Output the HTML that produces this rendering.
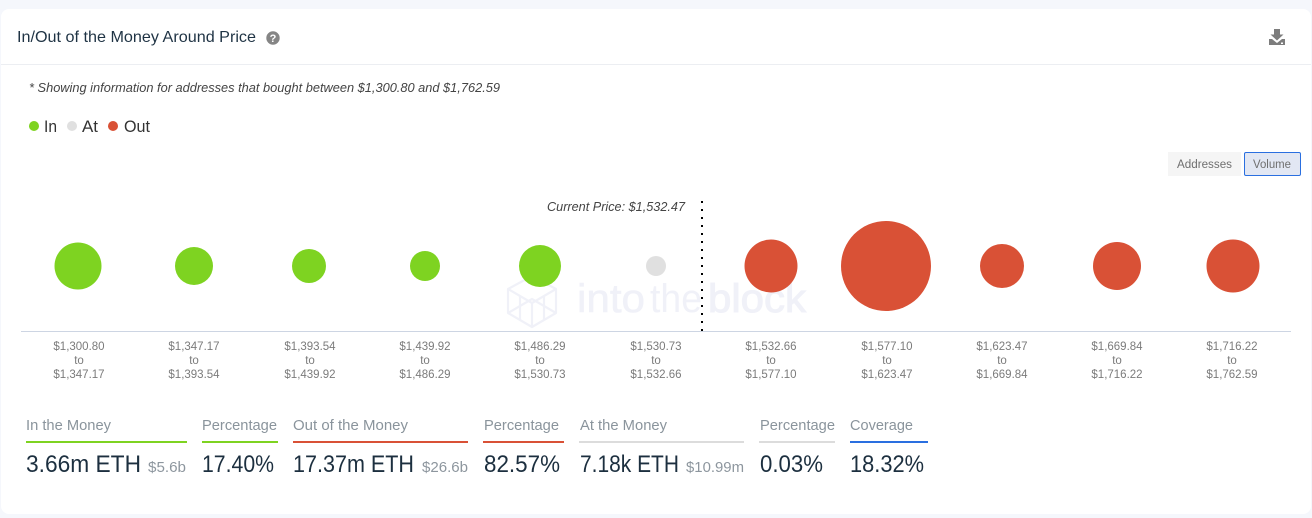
<!DOCTYPE html>
<html><head><meta charset="utf-8"><style>
html,body{margin:0;padding:0;background:#f5f7fc;width:1312px;height:518px;overflow:hidden}
svg{display:block;font-family:"Liberation Sans",sans-serif}
.lb{font-size:11.5px;fill:#7b7b7b;text-anchor:middle}
.h{font-size:14.5px;fill:#8a949c}
.v{font-size:24px;fill:#1c2f3f}
.s{font-size:14.5px;fill:#8d969e}
</style></head><body>
<svg width="1312" height="518" viewBox="0 0 1312 518" xmlns="http://www.w3.org/2000/svg">
<rect x="1" y="9" width="1310" height="505" rx="8" fill="#fff"/>
<rect x="1" y="64" width="1310" height="1" fill="#eceef2"/>
<text x="17" y="42" font-size="16" fill="#1f3344" textLength="239" lengthAdjust="spacingAndGlyphs">In/Out of the Money Around Price</text>
<circle cx="273" cy="38" r="6.7" fill="#858585"/>
<text x="273" y="42" font-size="11" font-weight="bold" fill="#fff" text-anchor="middle">?</text>
<path d="M1274 29h6v5.5h3.500l-6.500 6-6.500-6h3.500z" fill="#7d7d7d"/>
<path d="M1269 39h3l5 4 5-4h3v6h-16z" fill="#7d7d7d"/>
<rect x="1281" y="42.500" width="2" height="1.500" fill="#fff"/>
<text x="29" y="92" font-size="12.500" font-style="italic" fill="#444" textLength="471" lengthAdjust="spacingAndGlyphs">* Showing information for addresses that bought between $1,300.80 and $1,762.59</text>
<circle cx="34" cy="126" r="5" fill="#7ed321"/>
<text x="44" y="132" font-size="16.500" fill="#333" textLength="13" lengthAdjust="spacingAndGlyphs">In</text>
<circle cx="72" cy="126" r="5" fill="#e0e0e0"/>
<text x="82" y="132" font-size="16.500" fill="#333" textLength="16" lengthAdjust="spacingAndGlyphs">At</text>
<circle cx="113" cy="126" r="5" fill="#d95136"/>
<text x="124" y="132" font-size="16.500" fill="#333" textLength="26" lengthAdjust="spacingAndGlyphs">Out</text>
<rect x="1168" y="152" width="73" height="24" fill="#f5f5f5"/>
<text x="1177" y="168" font-size="11.500" fill="#6f6f6f" textLength="55" lengthAdjust="spacingAndGlyphs">Addresses</text>
<rect x="1244.500" y="152.500" width="56" height="23" rx="1.500" fill="#e2e7f3" stroke="#2a6fe0"/>
<text x="1253" y="168" font-size="11.500" fill="#6f6f6f" textLength="38" lengthAdjust="spacingAndGlyphs">Volume</text>
<g fill="none" stroke="#f0f1f8" stroke-width="2.200" stroke-linejoin="round">
<path d="M508 289v24l24 14 24-14v-24l-24-13z"/>
<path d="M508 289l24 14 24-14M532 303v24M508 313l24-14 24 14M520 296v24M544 296v24"/>
</g>
<g fill="#f0f1f8" font-size="40">
<text x="577" y="312" stroke="#f0f1f8" stroke-width="0.600" textLength="68" lengthAdjust="spacingAndGlyphs">into</text>
<text x="650" y="312" textLength="52" lengthAdjust="spacingAndGlyphs">the</text>
<text x="708" y="312" stroke="#f0f1f8" stroke-width="1" textLength="98" lengthAdjust="spacingAndGlyphs">block</text>
</g>
<text x="547" y="211" font-size="12.500" font-style="italic" fill="#444" textLength="138" lengthAdjust="spacingAndGlyphs">Current Price: $1,532.47</text>
<g fill="#7ed321">
<circle cx="78" cy="266" r="23.500"/><circle cx="194" cy="266" r="19"/><circle cx="309" cy="266" r="17"/><circle cx="425" cy="266" r="15"/><circle cx="540" cy="266" r="21"/>
</g>
<circle cx="656" cy="266" r="10" fill="#e0e0e0"/>
<g fill="#d95136">
<circle cx="771" cy="266" r="26.500"/><circle cx="886" cy="266" r="45"/><circle cx="1002" cy="266" r="22"/><circle cx="1117" cy="266" r="24"/><circle cx="1233" cy="266" r="26.500"/>
</g>
<rect x="21" y="331" width="1270" height="1" fill="#cdd5e3"/>
<line x1="702" y1="201" x2="702" y2="332" stroke="#000" stroke-width="2" stroke-dasharray="2 6"/>
<g class="labels">
<text class="lb" x="79" y="350">$1,300.80</text><text class="lb" x="79" y="364">to</text><text class="lb" x="79" y="378">$1,347.17</text>
<text class="lb" x="194" y="350">$1,347.17</text><text class="lb" x="194" y="364">to</text><text class="lb" x="194" y="378">$1,393.54</text>
<text class="lb" x="310" y="350">$1,393.54</text><text class="lb" x="310" y="364">to</text><text class="lb" x="310" y="378">$1,439.92</text>
<text class="lb" x="425" y="350">$1,439.92</text><text class="lb" x="425" y="364">to</text><text class="lb" x="425" y="378">$1,486.29</text>
<text class="lb" x="540" y="350">$1,486.29</text><text class="lb" x="540" y="364">to</text><text class="lb" x="540" y="378">$1,530.73</text>
<text class="lb" x="656" y="350">$1,530.73</text><text class="lb" x="656" y="364">to</text><text class="lb" x="656" y="378">$1,532.66</text>
<text class="lb" x="771" y="350">$1,532.66</text><text class="lb" x="771" y="364">to</text><text class="lb" x="771" y="378">$1,577.10</text>
<text class="lb" x="887" y="350">$1,577.10</text><text class="lb" x="887" y="364">to</text><text class="lb" x="887" y="378">$1,623.47</text>
<text class="lb" x="1002" y="350">$1,623.47</text><text class="lb" x="1002" y="364">to</text><text class="lb" x="1002" y="378">$1,669.84</text>
<text class="lb" x="1117" y="350">$1,669.84</text><text class="lb" x="1117" y="364">to</text><text class="lb" x="1117" y="378">$1,716.22</text>
<text class="lb" x="1232" y="350">$1,716.22</text><text class="lb" x="1232" y="364">to</text><text class="lb" x="1232" y="378">$1,762.59</text>
</g>
<text class="h" x="26" y="430" textLength="85" lengthAdjust="spacingAndGlyphs">In the Money</text>
<text class="h" x="202" y="430" textLength="75" lengthAdjust="spacingAndGlyphs">Percentage</text>
<text class="h" x="293" y="430" textLength="115" lengthAdjust="spacingAndGlyphs">Out of the Money</text>
<text class="h" x="484" y="430" textLength="75" lengthAdjust="spacingAndGlyphs">Percentage</text>
<text class="h" x="580" y="430" textLength="87" lengthAdjust="spacingAndGlyphs">At the Money</text>
<text class="h" x="760" y="430" textLength="75" lengthAdjust="spacingAndGlyphs">Percentage</text>
<text class="h" x="850" y="430" textLength="63" lengthAdjust="spacingAndGlyphs">Coverage</text>
<rect x="26" y="441" width="161" height="2" fill="#7ed321"/>
<rect x="202" y="441" width="76" height="2" fill="#7ed321"/>
<rect x="293" y="441" width="175" height="2" fill="#d95136"/>
<rect x="483" y="441" width="81" height="2" fill="#d95136"/>
<rect x="579" y="441" width="165" height="2" fill="#dcdcdc"/>
<rect x="759" y="441" width="76" height="2" fill="#dcdcdc"/>
<rect x="850" y="441" width="78" height="2" fill="#2a6fe0"/>
<text class="v" x="26" y="472" textLength="115" lengthAdjust="spacingAndGlyphs">3.66m ETH</text>
<text class="s" x="148" y="472" textLength="38" lengthAdjust="spacingAndGlyphs">$5.6b</text>
<text class="v" x="202" y="472" textLength="72" lengthAdjust="spacingAndGlyphs">17.40%</text>
<text class="v" x="293" y="472" textLength="121" lengthAdjust="spacingAndGlyphs">17.37m ETH</text>
<text class="s" x="422" y="472" textLength="46" lengthAdjust="spacingAndGlyphs">$26.6b</text>
<text class="v" x="484" y="472" textLength="76" lengthAdjust="spacingAndGlyphs">82.57%</text>
<text class="v" x="580" y="472" textLength="99" lengthAdjust="spacingAndGlyphs">7.18k ETH</text>
<text class="s" x="686" y="472" textLength="58" lengthAdjust="spacingAndGlyphs">$10.99m</text>
<text class="v" x="760" y="472" textLength="63" lengthAdjust="spacingAndGlyphs">0.03%</text>
<text class="v" x="850" y="472" textLength="74" lengthAdjust="spacingAndGlyphs">18.32%</text>
</svg>
</body></html>
